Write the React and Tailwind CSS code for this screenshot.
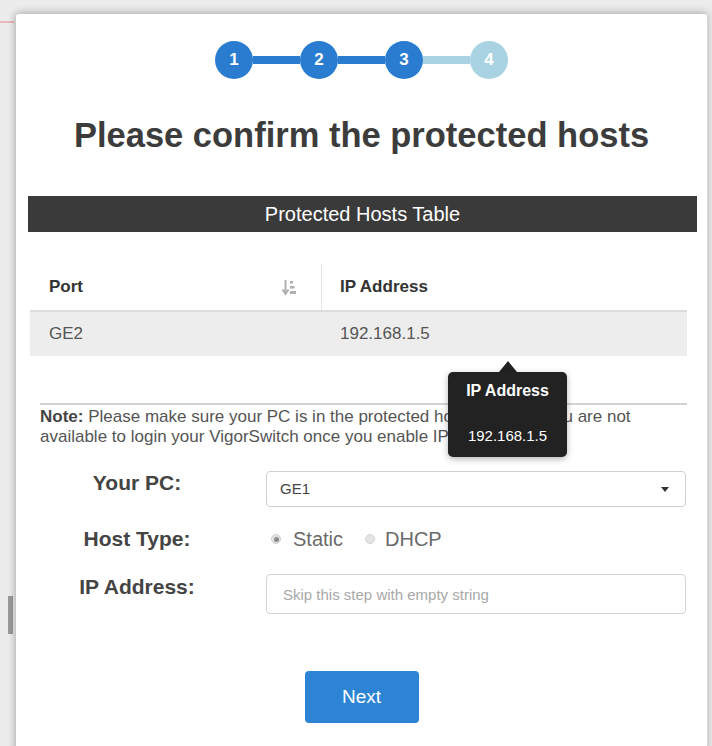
export default function App() {
  const steps = [
    { n: 1, on: true },
    { n: 2, on: true },
    { n: 3, on: true },
    { n: 4, on: false },
  ]

  return (
    <main
      className="relative w-[712px] h-[746px] overflow-hidden bg-[#ececec]"
      style={{ fontFamily: '"Liberation Sans", Arial, sans-serif' }}
    >
      {/* bits of the page behind the dialog */}
      <div className="absolute left-0 top-[21px] h-[2px] w-[14px] bg-[#e8b8b8]" />
      <div className="absolute left-[8px] top-[596px] h-[38px] w-[5px] bg-[#9a9a9a]" />

      <div className="relative ml-[16px] mt-[14px] w-[692px] h-[740px] bg-white rounded-[3px] shadow-[0_-2px_8px_rgba(0,0,0,0.18),-2px_0_6px_rgba(0,0,0,0.12)] border-r border-[#d8d8d8]">
        {/* steps */}
        <div className="flex justify-center pt-[27px]">
          {steps.map((s, i) => (
            <div key={s.n} className="flex items-center">
              {i > 0 && (
                <div className={`h-[8px] w-[47px] ${s.on ? "bg-[#2a7cd0]" : "bg-[#a9d3e3]"}`} />
              )}
              <div
                className={`w-[38px] h-[38px] rounded-full flex items-center justify-center text-white text-[17px] font-bold ${
                  s.on ? "bg-[#2a7cd0]" : "bg-[#a9d3e3]"
                }`}
              >
                {s.n}
              </div>
            </div>
          ))}
        </div>

        <h1 className="mt-[36px] text-center text-[34.5px] leading-[40px] font-bold text-[#3c3c3c]">
          Please confirm the protected hosts
        </h1>

        <div className="mt-[41px] ml-[12px] mr-[10px] h-[36px] bg-[#3a3a3a] flex items-center justify-center text-white text-[20px]">
          Protected Hosts Table
        </div>

        {/* table */}
        <div className="mt-[32px] ml-[14px] mr-[20px]">
          <div className="flex h-[48px] border-b-2 border-[#dcdcdc] text-[17px] font-bold text-[#333]">
            <div className="w-[292px] flex items-center justify-between pl-[19px] pr-[25px] border-r border-[#e4e4e4]">
              <span>Port</span>
              <svg width="14" height="17" viewBox="0 0 14 17" className="text-[#b0b0b0]">
                <path d="M3.5 1v13M0.5 10.5L3.5 15l3-4.5" stroke="currentColor" strokeWidth="2" fill="none" />
                <rect x="8" y="2" width="3" height="2.5" fill="currentColor" />
                <rect x="8" y="7" width="4.5" height="2.5" fill="currentColor" />
                <rect x="8" y="12" width="6" height="3" fill="currentColor" />
              </svg>
            </div>
            <div className="flex items-center pl-[18px]">IP Address</div>
          </div>
          <div className="flex h-[44px] items-center bg-[#ededed] text-[17px] text-[#555]">
            <div className="w-[292px] pl-[19px]">GE2</div>
            <div className="pl-[18px]">192.168.1.5</div>
          </div>
        </div>

        <div className="mt-[47px] ml-[24px] mr-[20px] h-[2px] bg-[#d2d2d2]" />

        <p className="mt-[2px] ml-[24px] mr-[40px] text-[17px] leading-[20px] text-[#555]">
          <span className="font-bold text-[#444]">Note:</span> Please make sure your PC is in the
          protected hosts table, or you are not available to login your VigorSwitch once you enable
          IP Source Guard.
        </p>

        {/* form */}
        <div className="mt-[24px] flex items-start pl-[24px] pr-[21px]">
          <label className="w-[194px] text-center text-[21px] leading-[24px] font-bold text-[#444]">
            Your PC:
          </label>
          <div className="ml-[32px] flex-1 h-[36px] rounded-[4px] border border-[#cfcfcf] flex items-center justify-between pl-[13px] pr-[16px] text-[15px] text-[#444]">
            <span>GE1</span>
            <span className="w-0 h-0 border-l-[4px] border-r-[4px] border-t-[5px] border-l-transparent border-r-transparent border-t-[#333]" />
          </div>
        </div>

        <div className="mt-[14px] h-[36px] flex items-center pl-[24px] pr-[21px]">
          <label className="w-[194px] text-center text-[21px] leading-[24px] font-bold text-[#444]">
            Host Type:
          </label>
          <div className="ml-[32px] flex items-center text-[20px] text-[#6a6a6a]">
            <span className="ml-[5px] w-[10px] h-[10px] rounded-full bg-[#e2e2e2] border border-[#cfcfcf] flex items-center justify-center">
              <span className="w-[5px] h-[5px] rounded-full bg-[#8a8a8a]" />
            </span>
            <span className="ml-[12px]">Static</span>
            <span className="ml-[22px] w-[10px] h-[10px] rounded-full bg-[#e4e4e4] border border-[#d2d2d2]" />
            <span className="ml-[10px]">DHCP</span>
          </div>
        </div>

        <div className="mt-[17px] flex items-start pl-[24px] pr-[21px]">
          <label className="w-[194px] text-center text-[21px] leading-[24px] font-bold text-[#444] pt-[1px]">
            IP Address:
          </label>
          <input
            type="text"
            placeholder="Skip this step with empty string"
            className="ml-[32px] flex-1 h-[40px] rounded-[4px] border border-[#d4d4d4] px-[16px] text-[15px] placeholder:text-[#a8a8a8] focus:outline-none"
          />
        </div>

        <div className="mt-[57px] flex justify-center">
          <button className="w-[114px] h-[52px] rounded-[4px] bg-[#2d84d5] text-white text-[19px]">
            Next
          </button>
        </div>

        {/* tooltip over the row */}
        <div className="absolute left-[432px] top-[347px]">
          <div className="ml-[51px] w-0 h-0 border-l-[9px] border-r-[9px] border-b-[11px] border-l-transparent border-r-transparent border-b-[#222]" />
          <div className="w-[119px] h-[85px] rounded-[5px] bg-[#222] text-white flex flex-col items-center shadow-[0_2px_6px_rgba(0,0,0,0.3)]">
            <span className="mt-[7px] text-[16px] font-bold">IP Address</span>
            <span className="mt-[22px] text-[15px]">192.168.1.5</span>
          </div>
        </div>
      </div>
    </main>
  )
}
